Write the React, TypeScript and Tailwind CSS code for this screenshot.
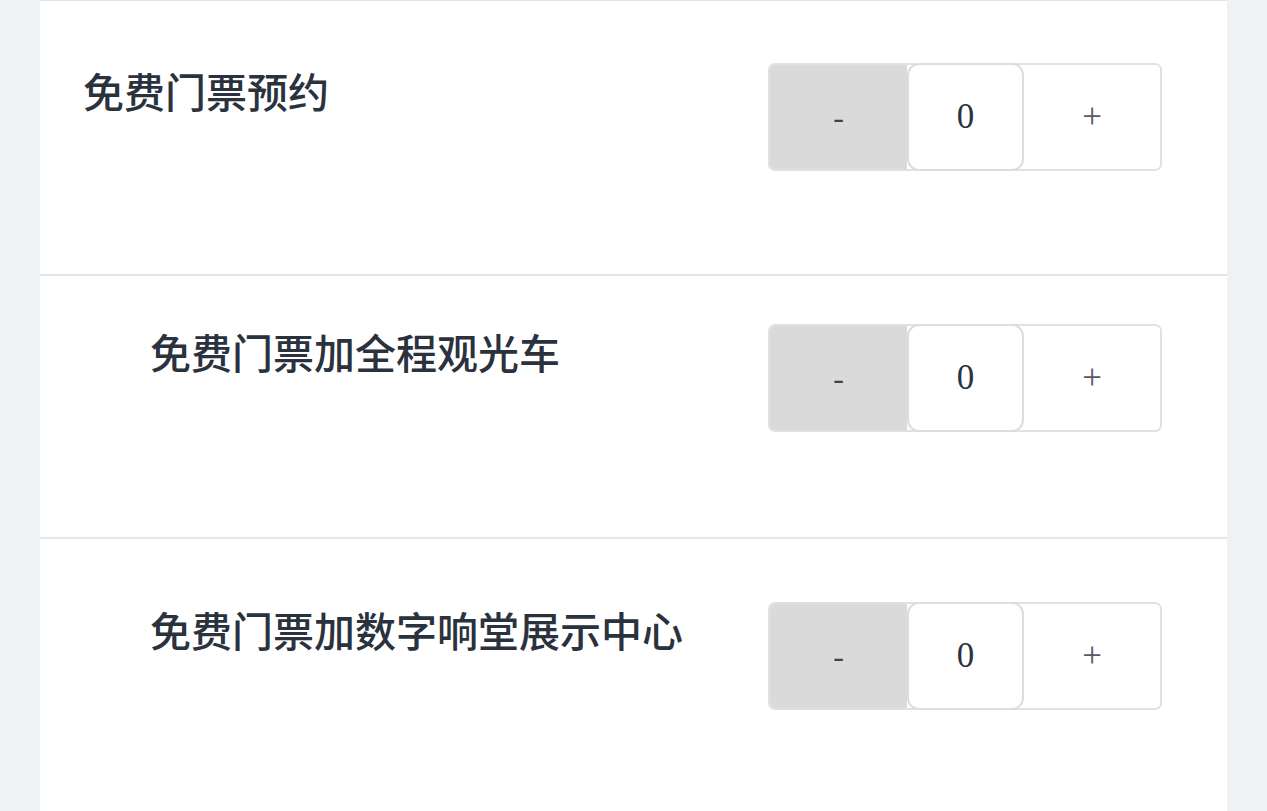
import { useState } from "react";

type Ticket = { id: string; name: string; indent: string; pad: string; height: string };

const tickets: Ticket[] = [
  { id: "free", name: "免费门票预约", indent: "pl-[43px]", pad: "pt-[62px]", height: "h-[275px]" },
  { id: "bus", name: "免费门票加全程观光车", indent: "pl-[110px]", pad: "pt-[48px]", height: "h-[263px]" },
  { id: "hall", name: "免费门票加数字响堂展示中心", indent: "pl-[110px]", pad: "pt-[63px]", height: "h-[280px]" },
];

function Stepper({ value, onChange }: { value: number; onChange: (v: number) => void }) {
  return (
    <div className="flex h-[108px] w-[394px] rounded-[7px] border-2 border-[#e1e1e1] font-['Liberation_Serif',serif] text-[#3a414c]">
      <button
        type="button"
        onClick={() => onChange(Math.max(0, value - 1))}
        className="flex w-[137px] items-center justify-center rounded-l-[5px] bg-[#dadada] text-[32px]"
      >
        -
      </button>
      <div className="-my-[2px] flex w-[117px] items-center justify-center rounded-[12px] border-2 border-[#dddddd] bg-white text-[35px] text-[#2b3340]">
        {value}
      </div>
      <button
        type="button"
        onClick={() => onChange(value + 1)}
        className="flex flex-1 items-center justify-center rounded-r-[5px] bg-white text-[35px] text-[#555b63]"
      >
        +
      </button>
    </div>
  );
}

export default function App() {
  const [counts, setCounts] = useState<Record<string, number>>({ free: 0, bus: 0, hall: 0 });

  return (
    <div className="min-h-[811px] bg-[#eef2f5] px-10">
      <div className="min-h-[811px] border-t border-[#e4e4e4] bg-white">
        {tickets.map((t, i) => (
          <div
            key={t.id}
            className={`flex items-start justify-between pr-[65px] ${t.indent} ${t.pad} ${t.height} ${
              i < tickets.length - 1 ? "border-b-2 border-[#e6e6e6]" : ""
            }`}
          >
            <p className="mt-[7px] font-['Noto_Sans_CJK_SC',sans-serif] text-[41px] leading-none font-medium text-[#2a323e]">
              {t.name}
            </p>
            <Stepper
              value={counts[t.id]}
              onChange={(v) => setCounts((c) => ({ ...c, [t.id]: v }))}
            />
          </div>
        ))}
      </div>
    </div>
  );
}
